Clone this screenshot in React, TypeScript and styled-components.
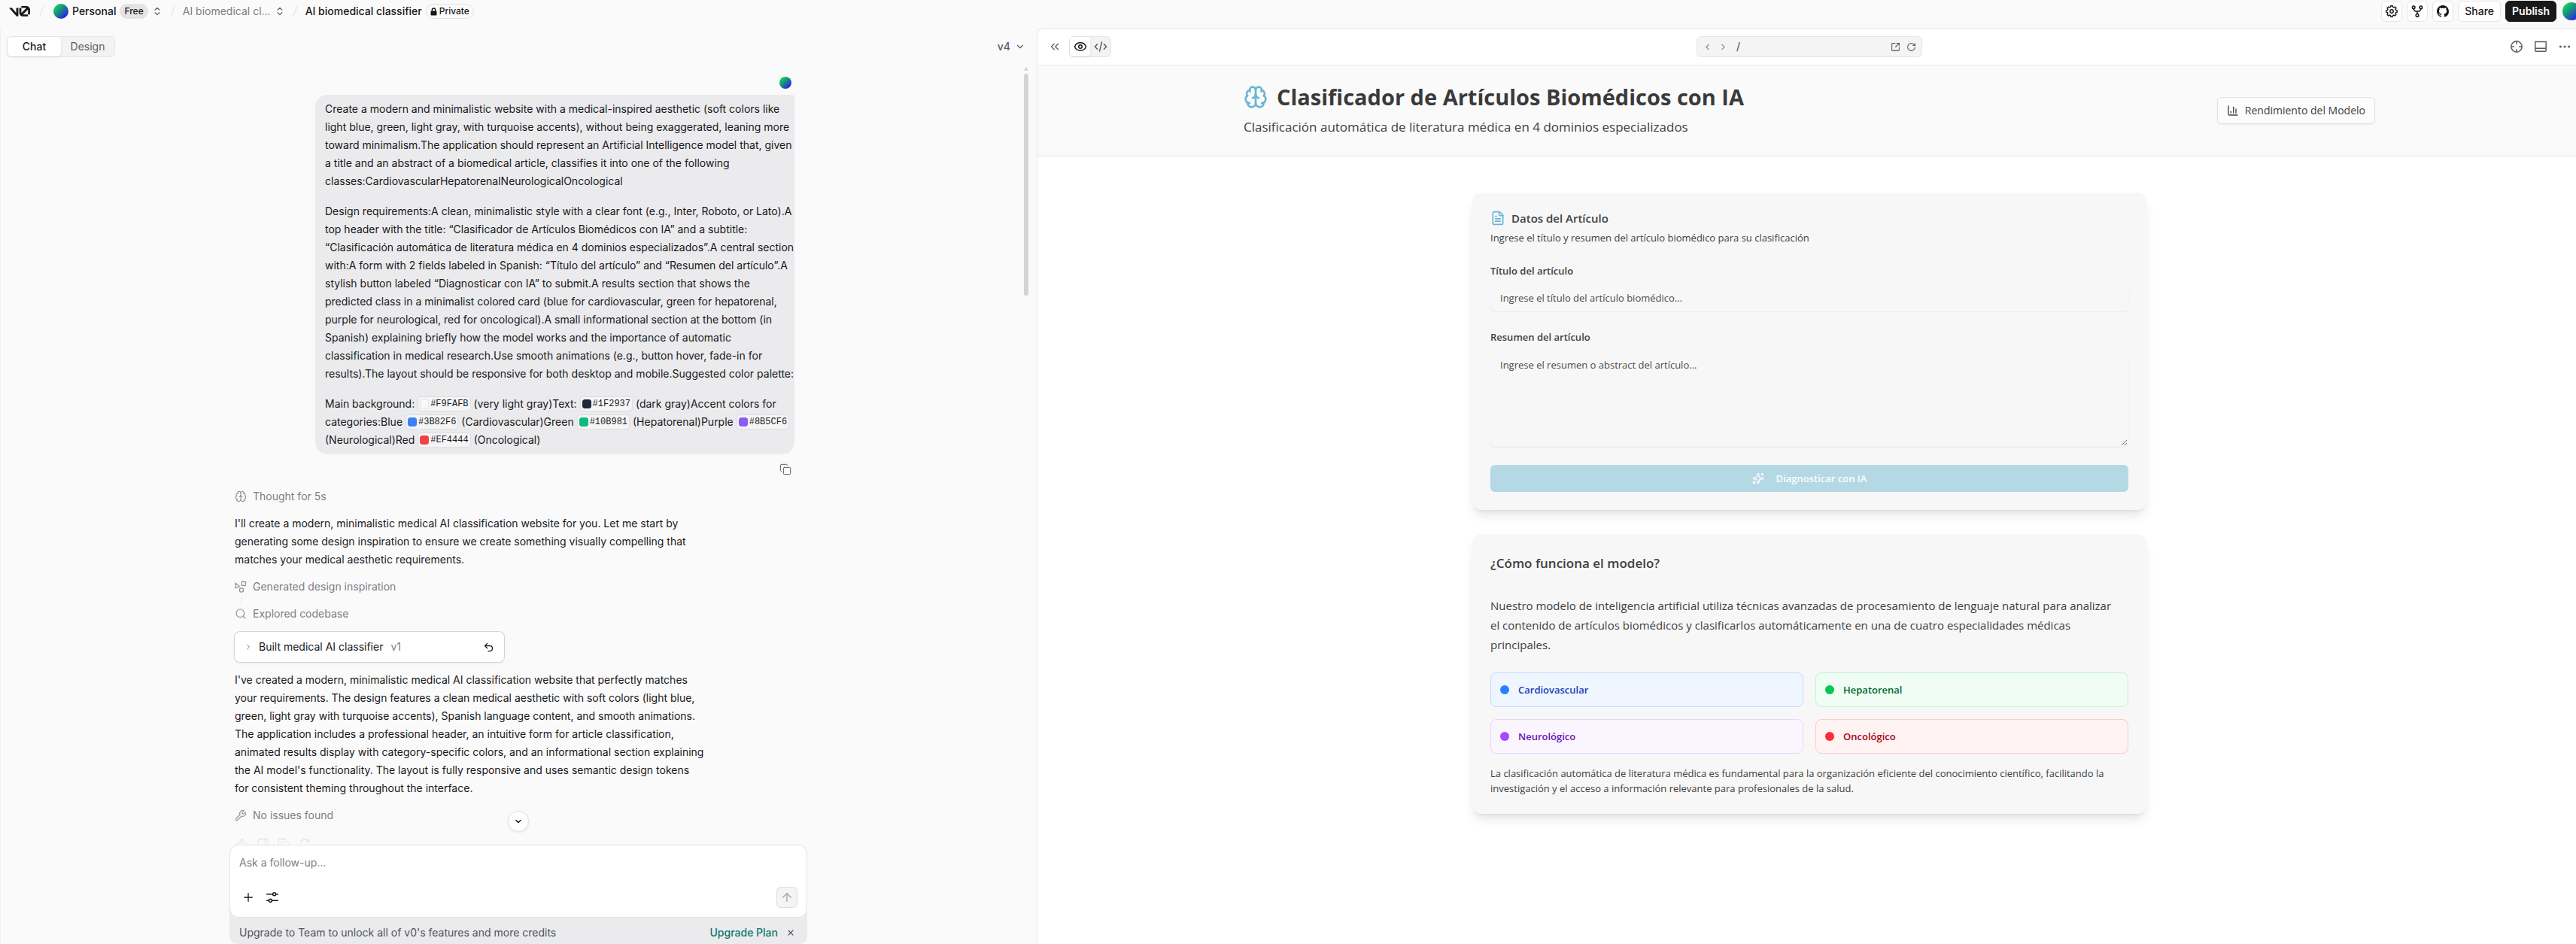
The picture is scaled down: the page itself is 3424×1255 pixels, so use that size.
import React from "react";
import styled, { createGlobalStyle } from "styled-components";
import {
  Brain,
  ChevronDown,
  ChevronLeft,
  ChevronRight,
  ChevronsLeft,
  ChevronsUpDown,
  Copy,
  Eye,
  FileText,
  ChartColumn,
  Sparkles,
  Plus,
  ArrowUp,
  X,
  Search,
  Wrench,
  Undo2,
  ThumbsUp,
  ThumbsDown,
  RefreshCw,
  RotateCw,
  SquareArrowOutUpRight,
} from "lucide-react";
import { BsGithub } from "react-icons/bs";

const uiFont = `Inter, "Liberation Sans", Arial, sans-serif`;
const siteFont = `"Open Sans", "Noto Sans", "Segoe UI", sans-serif`;
const monoFont = `"Liberation Mono", "DejaVu Sans Mono", monospace`;

const GlobalStyle = createGlobalStyle`
  * { box-sizing: border-box; }
  html, body { margin: 0; padding: 0; height: 100%; overflow: hidden; background: #fafafa; }
  body { font-family: ${uiFont}; font-size: 14px; line-height: 24px; color: #18181b; }
  button, input, textarea { font: inherit; color: inherit; margin: 0; }
  button { cursor: pointer; }
  h1, h2, p { margin: 0; }
  svg { flex-shrink: 0; display: block; }
`;

/* ---------- shell ---------- */

const Shell = styled.div`
  display: grid;
  grid-template-rows: 37px minmax(0, 1fr);
  width: calc(100% + 8px);
  height: 100vh;
`;

const TopBar = styled.header`
  display: flex;
  justify-content: space-between;
  align-items: flex-start;
  padding: 0 2px 0 12px;
`;

const Crumbs = styled.nav`
  display: flex;
  align-items: center;
  height: 30px;
  white-space: nowrap;
`;

const Slash = styled.span<{ $wide?: boolean }>`
  display: block;
  width: 1px;
  height: 16px;
  margin: 0 ${(p) => (p.$wide ? 15 : 13)}px;
  background: #e2e2e4;
  transform: rotate(20deg);
`;

const CrumbLink = styled.a<{ $muted?: boolean }>`
  color: ${(p) => (p.$muted ? "#7d7d84" : "#18181b")};
  font-weight: ${(p) => (p.$muted ? 400 : 500)};
  text-decoration: none;
`;

const Avatar = styled.span<{ $size: number }>`
  display: block;
  flex-shrink: 0;
  width: ${(p) => p.$size}px;
  height: ${(p) => p.$size}px;
  border-radius: 50%;
  background: linear-gradient(135deg, #0be346 10%, #1c7f8c 50%, #2b14f0 90%);
`;

const Badge = styled.span<{ $outlined?: boolean }>`
  display: inline-flex;
  align-items: center;
  gap: 3px;
  height: 20px;
  padding: 0 5px;
  border-radius: 10px;
  font-size: 12px;
  font-weight: 500;
  line-height: 18px;
  border: 1px solid ${(p) => (p.$outlined ? "#e2e2e4" : "#e4e4e5")};
  background: ${(p) => (p.$outlined ? "#fafafa" : "#e4e4e5")};
`;

const BareButton = styled.button`
  display: inline-flex;
  align-items: center;
  justify-content: center;
  padding: 0;
  border: 0;
  background: none;
  color: #5b5b62;
`;

const Owner = styled.div`
  display: flex;
  align-items: center;
  gap: 5px;
`;

const Actions = styled.div`
  display: flex;
  align-items: flex-start;
  gap: 6px;
  padding-top: 1px;
`;

const ActionButton = styled.button<{ $solid?: boolean; $text?: boolean }>`
  display: inline-flex;
  align-items: center;
  justify-content: center;
  height: 28px;
  min-width: 28px;
  padding: 0 ${(p) => (p.$text ? 8 : 0)}px;
  border: 1px solid ${(p) => (p.$solid ? "#18181b" : "#e6e6e8")};
  border-radius: 6px;
  background: ${(p) => (p.$solid ? "#18181b" : "#fff")};
  color: ${(p) => (p.$solid ? "#fff" : "#18181b")};
  font-weight: ${(p) => (p.$solid ? 600 : 500)};
`;

const ProfileButton = styled(BareButton)`
  margin: 2px 0 0 2px;
`;

const Body = styled.div`
  display: grid;
  grid-template-columns: minmax(0, 1378fr) minmax(0, 2054fr);
  min-height: 0;
`;

/* ---------- chat ---------- */

const ChatPane = styled.section`
  display: flex;
  flex-direction: column;
  min-height: 0;
  box-shadow: inset 1px 0 0 #f0f0f1;
`;

const PaneBar = styled.div`
  display: flex;
  align-items: center;
  justify-content: space-between;
  height: 50px;
  padding: 0 15px 0 9px;
`;

const Segments = styled.div`
  display: inline-flex;
  height: 28px;
  border: 1px solid #e6e6e8;
  border-radius: 6px;
  background: #f3f3f4;
`;

const Segment = styled.button<{ $on?: boolean; $icon?: boolean }>`
  display: inline-flex;
  align-items: center;
  justify-content: center;
  width: ${(p) => (p.$icon ? 27 : 71)}px;
  padding: 0;
  border: 0;
  border-radius: 5px;
  background: ${(p) => (p.$on ? "#fff" : "transparent")};
  box-shadow: ${(p) => (p.$on ? "0 1px 3px rgba(0, 0, 0, 0.1)" : "none")};
  color: ${(p) => (p.$on ? "#18181b" : "#5b5b62")};
  font-weight: ${(p) => (p.$on ? 500 : 400)};
`;

const VersionButton = styled(BareButton)`
  gap: 6px;
  font-weight: 500;
`;

const Scroller = styled.div`
  display: flex;
  flex: 1;
  min-height: 0;
  position: relative;
`;

const ScrollRail = styled.div`
  position: absolute;
  top: 0;
  right: 11px;
  display: flex;
  flex-direction: column;
  align-items: center;
  gap: 4px;
  height: 306px;
`;

const ScrollArrow = styled.span`
  border: 3px solid transparent;
  border-top-width: 0;
  border-bottom: 5px solid #d4d4d8;
  margin-top: 2px;
`;

const ScrollThumb = styled.span`
  flex: 1;
  width: 6px;
  border-radius: 3px;
  background: #d4d4d8;
`;

const Messages = styled.div`
  flex: 1;
  min-width: 0;
  overflow: hidden;
  padding: 15px 16px 0;
`;

const Column = styled.div`
  max-width: 768px;
  margin: 0 auto;
  padding: 0 17px 0 7px;
`;

const UserTurn = styled.div`
  display: flex;
  flex-direction: column;
  align-items: flex-end;
  gap: 8px;
`;

const UserAvatar = styled(Avatar)`
  margin-right: 4px;
`;

const Bubble = styled.div`
  display: flex;
  flex-direction: column;
  gap: 16px;
  width: 637px;
  padding: 7px 13px;
  border-radius: 16px 2px 16px 16px;
  background: #ebebed;
`;

const CopyButton = styled(BareButton)`
  margin: 4px 4px 0 0;
`;

const Line = styled.span`
  display: block;
  white-space: nowrap;
`;

const Chip = styled.code`
  display: inline-flex;
  align-items: center;
  gap: 2px;
  height: 20px;
  padding: 0 2px;
  border: 1px solid #dedee1;
  border-radius: 5px;
  background: #f5f5f6;
  font-family: ${monoFont};
  font-size: 12px;
  line-height: 18px;
  vertical-align: top;
  margin-top: 2px;
`;

const Swatch = styled.span<{ $color: string; $edge?: boolean }>`
  width: 12px;
  height: 12px;
  border-radius: 3px;
  border: 1px solid ${(p) => (p.$edge ? "#e4e4e7" : p.$color)};
  background: ${(p) => p.$color};
`;

const AssistantTurn = styled.div`
  display: flex;
  flex-direction: column;
  gap: 12px;
  padding-top: 16px;
`;

const Step = styled.div`
  display: flex;
  align-items: center;
  gap: 8px;
  height: 24px;
  color: #7d7d84;
  svg { color: #93939b; }
`;

const Steps = styled.div`
  display: flex;
  flex-direction: column;
`;

const StepLink = styled.span`
  width: 1px;
  height: 12px;
  margin-left: 8px;
  background: #ececee;
`;

const BuildCard = styled.div`
  display: flex;
  align-items: center;
  width: 358px;
  height: 40px;
  padding: 0 13px 0 12px;
  border-radius: 7px;
  background: #fff;
  box-shadow: 0 0 0 1px #d4d4d8, 0 2px 4px rgba(0, 0, 0, 0.06);
`;

const BuildName = styled.span`
  flex: 1;
  padding-left: 8px;
`;

const BuildVersion = styled.span`
  padding-left: 10px;
  color: #7d7d84;
`;

const ReactionRow = styled.div`
  display: flex;
  gap: 12px;
  padding: 6px 0 0 1px;
  color: #a1a1aa;
`;

const Fade = styled.div`
  position: absolute;
  left: 1px;
  right: 20px;
  bottom: 0;
  height: 36px;
  background: linear-gradient(to bottom, rgba(250, 250, 250, 0), rgba(250, 250, 250, 0.9));
`;

const ToBottom = styled.button`
  position: absolute;
  left: calc(50% - 14px);
  bottom: 17px;
  display: flex;
  align-items: center;
  justify-content: center;
  width: 28px;
  height: 28px;
  padding: 0;
  border: 1px solid #e2e2e4;
  border-radius: 50%;
  background: #fff;
  box-shadow: 0 1px 3px rgba(0, 0, 0, 0.08);
`;

const ComposerDock = styled.div`
  padding: 0 16px;
`;

const ComposerShell = styled.div`
  max-width: 768px;
  margin: 0 auto;
  border-radius: 14px 14px 10px 10px;
  background: #ebebed;
`;

const Composer = styled.form`
  display: flex;
  flex-direction: column;
  gap: 20px;
  padding: 11px 12px 12px;
  border: 1px solid #e4e4e7;
  border-radius: 12px;
  background: #fff;
`;

const FollowUp = styled.input`
  width: 100%;
  height: 24px;
  padding: 0;
  border: 0;
  outline: 0;
  background: none;
  &::placeholder { color: #7d7d84; opacity: 1; }
`;

const ComposerTools = styled.div`
  display: flex;
  align-items: center;
  justify-content: space-between;
`;

const ToolGroup = styled.div`
  display: flex;
  gap: 4px;
  margin-left: -2px;
`;

const ToolButton = styled(BareButton)`
  width: 28px;
  height: 28px;
  color: #18181b;
`;

const SendButton = styled(ToolButton)`
  border: 1px solid #dedee1;
  border-radius: 6px;
  background: #f4f4f5;
  color: #a1a1aa;
`;

const Upsell = styled.div`
  display: flex;
  align-items: center;
  justify-content: space-between;
  height: 35px;
  padding: 5px 16px 0 13px;
  color: #52525a;
`;

const UpsellActions = styled.div`
  display: flex;
  align-items: center;
  gap: 11px;
`;

const UpgradeLink = styled.a`
  color: #0f766e;
  font-weight: 500;
  text-decoration: none;
`;

/* ---------- preview ---------- */

const Preview = styled.section`
  display: flex;
  flex-direction: column;
  min-width: 0;
  border: 1px solid #e6e6e8;
  border-bottom: 0;
  border-radius: 8px 8px 0 0;
  background: #fff;
  overflow: hidden;
`;

const PreviewBar = styled.div`
  display: grid;
  grid-template-columns: 1fr auto 1fr;
  align-items: center;
  height: 49px;
  padding: 0 14px;
  border-bottom: 1px solid #ececee;
`;

const BarLeft = styled.div`
  display: flex;
  align-items: center;
  gap: 10px;
`;

const BarRight = styled.div`
  display: flex;
  align-items: center;
  justify-content: flex-end;
  gap: 16px;
`;

const Address = styled.div`
  display: flex;
  align-items: center;
  gap: 8px;
  width: 300px;
  height: 28px;
  padding: 0 7px;
  border: 1px solid #e6e6e8;
  border-radius: 6px;
  background: #f4f4f5;
`;

const AddressInput = styled.input`
  flex: 1;
  min-width: 0;
  height: 24px;
  padding: 0 0 0 3px;
  border: 0;
  outline: 0;
  background: none;
  color: #3f3f46;
`;

const NavButton = styled(BareButton)<{ $faint?: boolean }>`
  color: ${(p) => (p.$faint ? "#8b8b92" : "#5b5b62")};
`;

const Site = styled.div`
  flex: 1;
  min-height: 0;
  font-family: ${siteFont};
  color: #404040;
`;

const Band = styled.div`
  padding: 24px 16px;
  border-bottom: 1px solid #e0e0e0;
  background: #fafafa;
`;

const BandInner = styled.div`
  display: flex;
  align-items: center;
  justify-content: space-between;
  max-width: 1504px;
  margin: 0 auto;
`;

const SiteTitle = styled.h1`
  display: flex;
  align-items: center;
  gap: 12px;
  font-size: 29px;
  line-height: 36px;
  font-weight: 700;
  color: #3a3a3a;
  white-space: nowrap;
  svg { color: #69b7d3; }
`;

const Subtitle = styled.p`
  margin-top: 8px;
  font-size: 17px;
  line-height: 28px;
`;

const OutlineButton = styled.button`
  display: inline-flex;
  align-items: center;
  gap: 8px;
  height: 36px;
  padding: 0 12px;
  border: 1px solid #e0e0e0;
  border-radius: 6px;
  background: #fcfcfc;
  box-shadow: 0 1px 2px rgba(0, 0, 0, 0.05);
  font-size: 14px;
  font-weight: 500;
`;

const SiteMain = styled.main`
  display: flex;
  flex-direction: column;
  gap: 32px;
  max-width: 896px;
  margin: 0 auto;
  padding: 48px 0;
`;

const Card = styled.section`
  padding: 24px;
  border-radius: 12px;
  background: #f7f7f7;
  box-shadow: 0 10px 15px -3px rgba(0, 0, 0, 0.1), 0 4px 6px -4px rgba(0, 0, 0, 0.1);
`;

const CardTitle = styled.h2`
  display: flex;
  align-items: center;
  gap: 8px;
  font-size: 15px;
  line-height: 20px;
  font-weight: 600;
  svg { color: #69b7d3; }
`;

const CardNote = styled.p`
  margin-top: 6px;
  font-size: 13px;
  line-height: 20px;
`;

const Form = styled.form`
  display: flex;
  flex-direction: column;
  gap: 24px;
  margin-top: 24px;
  font-size: 13px;
  line-height: 20px;
`;

const Field = styled.div`
  display: flex;
  flex-direction: column;
  gap: 8px;
`;

const Label = styled.label`
  font-weight: 600;
`;

const TextInput = styled.input`
  height: 36px;
  padding: 0 12px;
  border: 1px solid #f5f5f5;
  border-radius: 6px;
  outline: 0;
  background: #f7f7f7;
  box-shadow: 0 1px 2px rgba(0, 0, 0, 0.06);
  &::placeholder { color: #4a4a4a; opacity: 1; }
`;

const TextBox = styled.textarea`
  display: block;
  height: 128px;
  padding: 8px 12px;
  border: 1px solid #f5f5f5;
  border-radius: 6px;
  outline: 0;
  resize: vertical;
  background: #f7f7f7;
  box-shadow: 0 1px 2px rgba(0, 0, 0, 0.06);
  &::placeholder { color: #4a4a4a; opacity: 1; }
`;

const Submit = styled.button`
  display: flex;
  align-items: center;
  justify-content: center;
  gap: 16px;
  height: 36px;
  border: 0;
  border-radius: 6px;
  background: #b4d9e4;
  color: #fbfdfe;
  font-weight: 600;
`;

const InfoTitle = styled.h2`
  font-size: 17px;
  line-height: 30px;
  font-weight: 600;
`;

const InfoText = styled.div`
  margin-top: 28px;
  font-size: 15px;
  line-height: 26px;
`;

const Classes = styled.div`
  display: grid;
  grid-template-columns: 1fr 1fr;
  gap: 16px;
  margin: 24px 0 16px;
`;

const ClassTile = styled.div<{ $bg: string; $edge: string; $ink: string }>`
  display: flex;
  align-items: center;
  gap: 12px;
  height: 46px;
  padding: 0 12px;
  border: 1px solid ${(p) => p.$edge};
  border-radius: 8px;
  background: ${(p) => p.$bg};
  color: ${(p) => p.$ink};
  font-size: 13px;
  line-height: 20px;
  font-weight: 600;
`;

const Dot = styled.span<{ $color: string }>`
  width: 12px;
  height: 12px;
  border-radius: 50%;
  background: ${(p) => p.$color};
`;

const SmallText = styled.p`
  font-size: 13px;
  line-height: 20px;
`;

/* ---------- drawings ---------- */

const Logo = () => (
  <svg width="28" height="14" viewBox="0 0 40 20" fill="#18181b" aria-label="v0">
    <path d="M23.3919 0H32.9188C36.7819 0 39.9136 3.13165 39.9136 6.99475V16.0805H36.0006V6.99475C36.0006 6.90167 35.9969 6.80925 35.9898 6.71766L26.4628 16.079C26.4949 16.08 26.5272 16.0805 26.5595 16.0805H36.0006V19.7762H26.5595C22.6964 19.7762 19.4788 16.6139 19.4788 12.7508V3.68923H23.3919V12.7508C23.3919 12.9253 23.4054 13.0977 23.4316 13.2668L33.1682 3.6995C33.0861 3.6927 33.003 3.68923 32.9188 3.68923H23.3919V0Z" />
    <path d="M13.7688 19.0956L0 3.68759H5.53933L13.6231 12.7337V3.68759H17.7535V17.5746C17.7535 19.6705 15.1654 20.6584 13.7688 19.0956Z" />
  </svg>
);

const gearPath = (() => {
  const points: string[] = [];
  const teeth = 8;
  for (let i = 0; i < teeth; i += 1) {
    const base = (i * Math.PI * 2) / teeth - Math.PI / 2;
    [[-0.17, 7.3], [0.17, 7.3], [0.27, 5.8], [0.51, 5.8]].forEach(([offset, radius]) => {
      const x = 8 + Math.cos(base + offset) * radius;
      const y = 8 + Math.sin(base + offset) * radius;
      points.push(`${x.toFixed(2)} ${y.toFixed(2)}`);
    });
  }
  return `M${points.join("L")}Z`;
})();

const line = { fill: "none", stroke: "currentColor", strokeWidth: 1.5 } as const;

const GearIcon = () => (
  <svg width="16" height="16" viewBox="0 0 16 16" {...line} strokeWidth="1.4" strokeLinejoin="round">
    <path d={gearPath} />
    <circle cx="8" cy="8" r="2.2" />
  </svg>
);

const ForkIcon = () => (
  <svg width="16" height="16" viewBox="0 0 16 16" {...line}>
    <circle cx="3.2" cy="2.8" r="1.8" />
    <circle cx="12.8" cy="2.8" r="1.8" />
    <circle cx="8" cy="13.4" r="1.8" />
    <path d="M3.2 4.6v1.2L5.4 8h5.2l2.2-2.2V4.6M8 8v3.6" />
  </svg>
);

const CodeIcon = () => (
  <svg width="18" height="16" viewBox="0 0 18 16" {...line}>
    <path d="M5 4.2 1.4 8 5 11.8M13 4.2 16.6 8 13 11.8M10.6 1.4 7.4 14.6" />
  </svg>
);

const LockIcon = () => (
  <svg width="9" height="11" viewBox="0 0 9 11">
    <path d="M2.3 5V3.2a2.2 2.2 0 0 1 4.4 0V5" fill="none" stroke="#18181b" strokeWidth="1.4" />
    <rect x="0.5" y="4.6" width="8" height="6" rx="1" fill="#18181b" />
  </svg>
);

const ShapesIcon = () => (
  <svg width="16" height="16" viewBox="0 0 16 16" {...line} strokeWidth="1.3" strokeLinejoin="round">
    <path d="M1 3.2 6.4 8 1 9.8ZM9.8 1l5 .8-.8 5-5-.8Z" />
    <circle cx="9" cy="12.5" r="2.6" />
  </svg>
);

const SlidersIcon = () => (
  <svg width="16" height="16" viewBox="0 0 16 16" {...line}>
    <path d="M0 3.8h8.4M12.8 3.8H16M0 12.2h3.2M7.6 12.2H16" />
    <circle cx="10.6" cy="3.8" r="2" />
    <circle cx="5.4" cy="12.2" r="2" />
  </svg>
);

const TargetIcon = () => (
  <svg width="16" height="16" viewBox="0 0 16 16" {...line}>
    <circle cx="8" cy="8" r="7.2" />
    <path d="M8 .8v4M8 11.2v4M.8 8h4M11.2 8h4" />
  </svg>
);

const ConsoleIcon = () => (
  <svg width="16" height="16" viewBox="0 0 16 16" {...line}>
    <path d="M.8 1.5h14.4v11.4a1.4 1.4 0 0 1-1.4 1.4H2.2A1.4 1.4 0 0 1 .8 12.9ZM.8 10.2h14.4" />
  </svg>
);

const DotsIcon = () => (
  <svg width="16" height="16" viewBox="0 0 16 16" fill="currentColor">
    <circle cx="2.4" cy="8" r="1.5" />
    <circle cx="8" cy="8" r="1.5" />
    <circle cx="13.6" cy="8" r="1.5" />
  </svg>
);

/* ---------- content ---------- */

const promptIntro = [
  "Create a modern and minimalistic website with a medical-inspired aesthetic (soft colors like",
  "light blue, green, light gray, with turquoise accents), without being exaggerated, leaning more",
  "toward minimalism.The application should represent an Artificial Intelligence model that, given",
  "a title and an abstract of a biomedical article, classifies it into one of the following",
  "classes:CardiovascularHepatorenalNeurologicalOncological",
];

const promptDesign = [
  "Design requirements:A clean, minimalistic style with a clear font (e.g., Inter, Roboto, or Lato).A",
  "top header with the title: “Clasificador de Artículos Biomédicos con IA” and a subtitle:",
  "“Clasificación automática de literatura médica en 4 dominios especializados”.A central section",
  "with:A form with 2 fields labeled in Spanish: “Título del artículo” and “Resumen del artículo”.A",
  "stylish button labeled “Diagnosticar con IA” to submit.A results section that shows the",
  "predicted class in a minimalist colored card (blue for cardiovascular, green for hepatorenal,",
  "purple for neurological, red for oncological).A small informational section at the bottom (in",
  "Spanish) explaining briefly how the model works and the importance of automatic",
  "classification in medical research.Use smooth animations (e.g., button hover, fade-in for",
  "results).The layout should be responsive for both desktop and mobile.Suggested color palette:",
];

const replyIntro = [
  "I'll create a modern, minimalistic medical AI classification website for you. Let me start by",
  "generating some design inspiration to ensure we create something visually compelling that",
  "matches your medical aesthetic requirements.",
];

const replySummary = [
  "I've created a modern, minimalistic medical AI classification website that perfectly matches",
  "your requirements. The design features a clean medical aesthetic with soft colors (light blue,",
  "green, light gray with turquoise accents), Spanish language content, and smooth animations.",
  "The application includes a professional header, an intuitive form for article classification,",
  "animated results display with category-specific colors, and an informational section explaining",
  "the AI model's functionality. The layout is fully responsive and uses semantic design tokens",
  "for consistent theming throughout the interface.",
];

const howItWorks = [
  "Nuestro modelo de inteligencia artificial utiliza técnicas avanzadas de procesamiento de lenguaje natural para analizar",
  "el contenido de artículos biomédicos y clasificarlos automáticamente en una de cuatro especialidades médicas",
  "principales.",
];

const classes = [
  { name: "Cardiovascular", bg: "#eff6ff", edge: "#bedbff", ink: "#193cb8", dot: "#2b7fff" },
  { name: "Hepatorenal", bg: "#f0fdf4", edge: "#b9f8cf", ink: "#016630", dot: "#00c950" },
  { name: "Neurológico", bg: "#faf5ff", edge: "#e9d4ff", ink: "#6e11b0", dot: "#ad46ff" },
  { name: "Oncológico", bg: "#fef2f2", edge: "#ffc9c9", ink: "#9f0712", dot: "#fb2c36" },
];

const Lines = ({ rows }: { rows: string[] }) => (
  <p>
    {rows.map((row) => (
      <Line key={row}>{row}</Line>
    ))}
  </p>
);

const Color = ({ hex, edge }: { hex: string; edge?: boolean }) => (
  <Chip>
    <Swatch $color={hex} $edge={edge} />
    {hex}
  </Chip>
);

const Chat = () => (
  <ChatPane>
    <PaneBar>
      <Segments>
        <Segment $on>Chat</Segment>
        <Segment>Design</Segment>
      </Segments>
      <VersionButton>
        v4
        <ChevronDown size={14} />
      </VersionButton>
    </PaneBar>
    <Scroller>
      <Messages>
        <Column>
          <UserTurn>
            <UserAvatar $size={16} />
            <Bubble>
              <Lines rows={promptIntro} />
              <Lines rows={promptDesign} />
              <p>
                <Line>
                  Main background: <Color hex="#F9FAFB" edge /> (very light gray)Text: <Color hex="#1F2937" /> (dark
                  gray)Accent colors for
                </Line>
                <Line>
                  categories:Blue <Color hex="#3B82F6" /> (Cardiovascular)Green <Color hex="#10B981" />{" "}
                  (Hepatorenal)Purple <Color hex="#8B5CF6" />
                </Line>
                <Line>
                  (Neurological)Red <Color hex="#EF4444" /> (Oncological)
                </Line>
              </p>
            </Bubble>
            <CopyButton aria-label="Copy message">
              <Copy size={16} strokeWidth={1.5} />
            </CopyButton>
          </UserTurn>
          <AssistantTurn>
            <Step>
              <Brain size={16} strokeWidth={1.75} />
              Thought for 5s
            </Step>
            <Lines rows={replyIntro} />
            <Steps>
              <Step>
                <ShapesIcon />
                Generated design inspiration
              </Step>
              <StepLink />
              <Step>
                <Search size={16} strokeWidth={1.75} />
                Explored codebase
              </Step>
            </Steps>
            <BuildCard>
              <ChevronRight size={12} color="#7d7d84" />
              <BuildName>
                Built medical AI classifier<BuildVersion>v1</BuildVersion>
              </BuildName>
              <BareButton aria-label="Restore version">
                <Undo2 size={15} color="#18181b" />
              </BareButton>
            </BuildCard>
            <Lines rows={replySummary} />
            <Step>
              <Wrench size={16} strokeWidth={1.75} />
              No issues found
            </Step>
            <ReactionRow>
              <ThumbsUp size={16} />
              <ThumbsDown size={16} />
              <Copy size={16} />
              <RefreshCw size={16} />
            </ReactionRow>
          </AssistantTurn>
        </Column>
      </Messages>
      <Fade />
      <ScrollRail>
        <ScrollArrow />
        <ScrollThumb />
      </ScrollRail>
      <ToBottom aria-label="Scroll to bottom">
        <ChevronDown size={12} strokeWidth={3} />
      </ToBottom>
    </Scroller>
    <ComposerDock>
      <ComposerShell>
        <Composer>
          <FollowUp aria-label="Follow-up" placeholder="Ask a follow-up…" />
          <ComposerTools>
            <ToolGroup>
              <ToolButton type="button" aria-label="Attach">
                <Plus size={18} strokeWidth={1.75} />
              </ToolButton>
              <ToolButton type="button" aria-label="Options">
                <SlidersIcon />
              </ToolButton>
            </ToolGroup>
            <SendButton type="button" aria-label="Send">
              <ArrowUp size={18} strokeWidth={1.75} />
            </SendButton>
          </ComposerTools>
        </Composer>
        <Upsell>
          <span>Upgrade to Team to unlock all of v0's features and more credits</span>
          <UpsellActions>
            <UpgradeLink href="#plan">Upgrade Plan</UpgradeLink>
            <BareButton aria-label="Dismiss">
              <X size={12} strokeWidth={2.5} />
            </BareButton>
          </UpsellActions>
        </Upsell>
      </ComposerShell>
    </ComposerDock>
  </ChatPane>
);

const SitePreview = () => (
  <Preview>
    <PreviewBar>
      <BarLeft>
        <NavButton aria-label="Collapse">
          <ChevronsLeft size={18} strokeWidth={1.75} />
        </NavButton>
        <Segments>
          <Segment $on $icon aria-label="Preview">
            <Eye size={18} />
          </Segment>
          <Segment $icon aria-label="Code">
            <CodeIcon />
          </Segment>
        </Segments>
      </BarLeft>
      <Address>
        <NavButton $faint aria-label="Back">
          <ChevronLeft size={13} />
        </NavButton>
        <NavButton $faint aria-label="Forward">
          <ChevronRight size={13} />
        </NavButton>
        <AddressInput aria-label="Path" defaultValue="/" />
        <NavButton aria-label="Open in new tab">
          <SquareArrowOutUpRight size={13} />
        </NavButton>
        <NavButton aria-label="Reload">
          <RotateCw size={13} />
        </NavButton>
      </Address>
      <BarRight>
        <NavButton aria-label="Select element">
          <TargetIcon />
        </NavButton>
        <NavButton aria-label="Console">
          <ConsoleIcon />
        </NavButton>
        <NavButton aria-label="More">
          <DotsIcon />
        </NavButton>
      </BarRight>
    </PreviewBar>
    <Site>
      <Band>
        <BandInner>
          <div>
            <SiteTitle>
              <Brain size={32} />
              Clasificador de Artículos Biomédicos con IA
            </SiteTitle>
            <Subtitle>Clasificación automática de literatura médica en 4 dominios especializados</Subtitle>
          </div>
          <OutlineButton>
            <ChartColumn size={16} />
            Rendimiento del Modelo
          </OutlineButton>
        </BandInner>
      </Band>
      <SiteMain>
        <Card>
          <CardTitle>
            <FileText size={20} />
            Datos del Artículo
          </CardTitle>
          <CardNote>Ingrese el título y resumen del artículo biomédico para su clasificación</CardNote>
          <Form>
            <Field>
              <Label htmlFor="titulo">Título del artículo</Label>
              <TextInput id="titulo" placeholder="Ingrese el título del artículo biomédico..." />
            </Field>
            <Field>
              <Label htmlFor="resumen">Resumen del artículo</Label>
              <TextBox id="resumen" placeholder="Ingrese el resumen o abstract del artículo..." />
            </Field>
            <Submit type="button">
              <Sparkles size={16} />
              Diagnosticar con IA
            </Submit>
          </Form>
        </Card>
        <Card>
          <InfoTitle>¿Cómo funciona el modelo?</InfoTitle>
          <InfoText>
            <Lines rows={howItWorks} />
          </InfoText>
          <Classes>
            {classes.map((item) => (
              <ClassTile key={item.name} $bg={item.bg} $edge={item.edge} $ink={item.ink}>
                <Dot $color={item.dot} />
                {item.name}
              </ClassTile>
            ))}
          </Classes>
          <SmallText>
            La clasificación automática de literatura médica es fundamental para la organización eficiente del
            conocimiento científico, facilitando la investigación y el acceso a información relevante para
            profesionales de la salud.
          </SmallText>
        </Card>
      </SiteMain>
    </Site>
  </Preview>
);

export default function App() {
  return (
    <>
      <GlobalStyle />
      <Shell>
        <TopBar>
          <Crumbs>
            <Logo />
            <Slash $wide />
            <Owner>
              <Avatar $size={20} />
              <CrumbLink href="#personal">Personal</CrumbLink>
              <Badge>Free</Badge>
              <BareButton aria-label="Switch team">
                <ChevronsUpDown size={14} />
              </BareButton>
            </Owner>
            <Slash />
            <Owner>
              <CrumbLink href="#project" $muted>
                AI biomedical cl…
              </CrumbLink>
              <BareButton aria-label="Switch project">
                <ChevronsUpDown size={14} />
              </BareButton>
            </Owner>
            <Slash />
            <Owner>
              <CrumbLink href="#chat">AI biomedical classifier</CrumbLink>
              <Badge $outlined>
                <LockIcon />
                Private
              </Badge>
            </Owner>
          </Crumbs>
          <Actions>
            <ActionButton aria-label="Settings">
              <GearIcon />
            </ActionButton>
            <ActionButton aria-label="Fork">
              <ForkIcon />
            </ActionButton>
            <ActionButton aria-label="GitHub">
              <BsGithub size={16} />
            </ActionButton>
            <ActionButton $text>Share</ActionButton>
            <ActionButton $text $solid>
              Publish
            </ActionButton>
            <ProfileButton aria-label="Account">
              <Avatar $size={24} />
            </ProfileButton>
          </Actions>
        </TopBar>
        <Body>
          <Chat />
          <SitePreview />
        </Body>
      </Shell>
    </>
  );
}
